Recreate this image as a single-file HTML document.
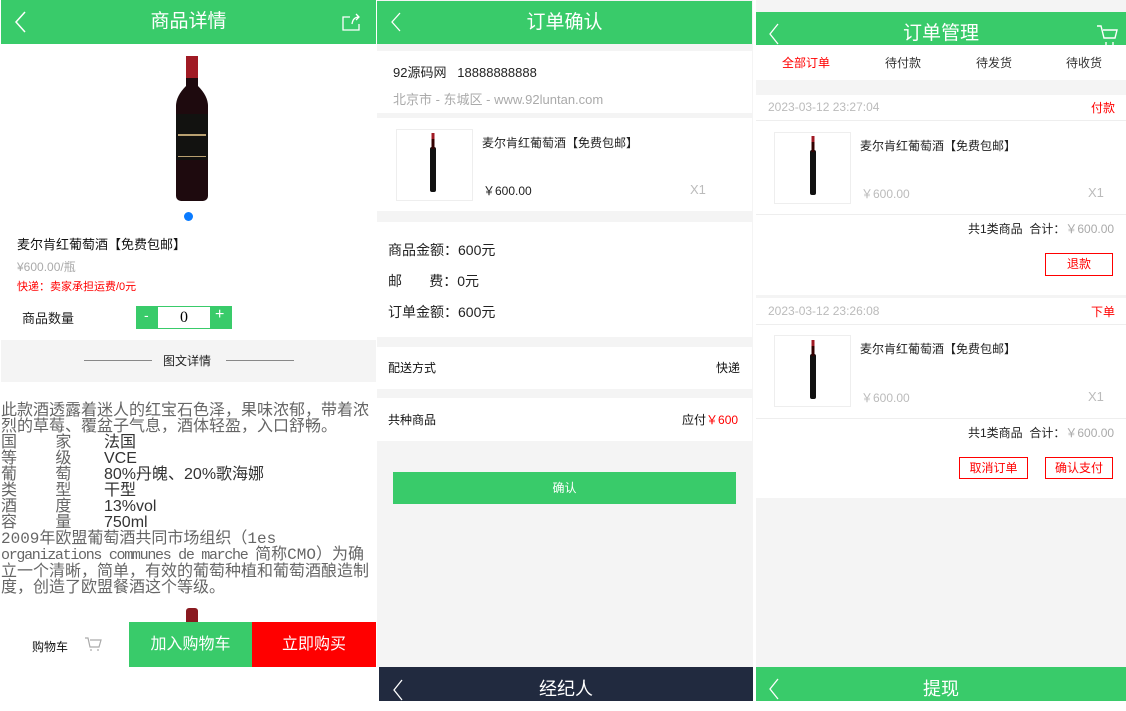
<!DOCTYPE html>
<html><head><meta charset="utf-8"><style>
*{margin:0;padding:0;box-sizing:border-box}
body{width:1126px;height:701px;position:relative;overflow:hidden;background:#fff;font-family:"Liberation Sans","Noto Sans CJK SC",sans-serif;color:#333}
.a{position:absolute;white-space:nowrap}
.g{background:#39cb6a}
.gr{background:#f4f4f4}
.hd{color:#fff;font-size:19px;text-align:center;line-height:44px}
.box{position:absolute;border:1px solid #eee;background:#fff}
.mono{font-family:"Liberation Mono","WenQuanYi Zen Hei",monospace;color:#666;font-size:16px;line-height:16px}
.kv{font-family:"Liberation Sans","Noto Sans CJK SC",sans-serif;color:#333;font-size:16px}
.btn{position:absolute;border:1px solid #f00;color:#f00;font-size:12px;text-align:center;line-height:20px}
</style></head><body>

<svg width="0" height="0" style="position:absolute"><defs>
<g id="bt"><rect x="-16" y="45" width="32" height="100" rx="5" fill="#1e0a0e"/><path d="M-6 0h12v30q10 10 10 20h-32q0-10 10-20z" fill="#1e0a0e"/><rect x="-6" y="0" width="12" height="22" fill="#a01a24"/><rect x="-16" y="58" width="32" height="46" fill="#121210"/><rect x="-14" y="78" width="28" height="2" fill="#b8a070"/><rect x="-14" y="100" width="28" height="1" fill="#b8a070"/></g>
<g id="sb"><rect x="-3" y="14" width="6" height="45" rx="2" fill="#111"/><rect x="-1.5" y="0" width="3" height="16" fill="#300"/><rect x="-1.5" y="0" width="3" height="6" fill="#a01a24"/></g>
</defs></svg>

<!-- Panel 1 -->
<div class="a g hd" style="left:1px;top:0;width:375px;height:44px">商品详情</div>
<svg class="a" style="left:14px;top:10px" width="14" height="24"><path d="M11 2L2 12l9 10" stroke="#fff" stroke-width="1.5" fill="none"/></svg>
<svg class="a" style="left:342px;top:13px" width="20" height="18"><path d="M8 4H1v13h16v-6M10 11q1-7 7-7M14 1l3 3-3 3" stroke="#fff" stroke-width="1.3" fill="none"/></svg>
<svg class="a" style="left:176px;top:56px" width="40" height="150"><use href="#bt" x="16"/></svg>
<div class="a" style="left:184px;top:212px;width:9px;height:9px;border-radius:50%;background:#0a7bff"></div>
<div class="a" style="left:17px;top:234px;font-size:13px;color:#111">麦尔肯红葡萄酒【免费包邮】</div>
<div class="a" style="left:17px;top:258px;font-size:12px;color:#aaa">¥600.00/瓶</div>
<div class="a" style="left:17px;top:278px;font-size:11px;color:#f00">快递：卖家承担运费/0元</div>
<div class="a" style="left:22px;top:308px;font-size:13px;color:#222">商品数量</div>
<div class="a g" style="left:136px;top:306px;width:96px;height:23px"></div>
<div class="a" style="left:158px;top:307px;width:52px;height:21px;background:#fff;text-align:center;font-size:16px;line-height:21px;font-family:'Liberation Serif',serif;color:#000">0</div>
<div class="a" style="left:144px;top:307px;color:#fff;font-size:14px">-</div>
<div class="a" style="left:215px;top:306px;color:#fff;font-size:16px">+</div>
<div class="a gr" style="left:1px;top:340px;width:375px;height:42px"></div>
<div class="a" style="left:84px;top:360px;width:68px;height:1px;background:#888"></div>
<div class="a" style="left:226px;top:360px;width:68px;height:1px;background:#888"></div>
<div class="a" style="left:163px;top:352px;font-size:12px;color:#222">图文详情</div>
<div class="a mono" style="left:1px;top:403px;width:370px;white-space:normal;word-break:break-all">此款酒透露着迷人的红宝石色泽，果味浓郁，带着浓烈的草莓、覆盆子气息，酒体轻盈，入口舒畅。<br>
<span style="display:inline-block;width:103px">国&nbsp;&nbsp;&nbsp;&nbsp;家</span><span class="kv">法国</span><br>
<span style="display:inline-block;width:103px">等&nbsp;&nbsp;&nbsp;&nbsp;级</span><span class="kv">VCE</span><br>
<span style="display:inline-block;width:103px">葡&nbsp;&nbsp;&nbsp;&nbsp;萄</span><span class="kv">80%丹魄、20%歌海娜</span><br>
<span style="display:inline-block;width:103px">类&nbsp;&nbsp;&nbsp;&nbsp;型</span><span class="kv">干型</span><br>
<span style="display:inline-block;width:103px">酒&nbsp;&nbsp;&nbsp;&nbsp;度</span><span class="kv">13%vol</span><br>
<span style="display:inline-block;width:103px">容&nbsp;&nbsp;&nbsp;&nbsp;量</span><span class="kv">750ml</span><br>
2009年欧盟葡萄酒共同市场组织（1es<br><span style="font-size:15px;letter-spacing:-1.3px">organizations communes de marche </span>简称CMO）为确<br>立一个清晰，简单，有效的葡萄种植和葡萄酒酿造制<br>度，创造了欧盟餐酒这个等级。</div>
<div class="a" style="left:186px;top:608px;width:12px;height:14px;background:#8a1a20;border-radius:3px 3px 0 0"></div>
<div class="a" style="left:32px;top:638px;font-size:12px;color:#111">购物车</div>
<svg class="a" style="left:84px;top:636px" width="18" height="16"><path d="M1 2h3l2 9h9l2-7H6M7 13v2M14 13v2" stroke="#aaa" stroke-width="1.2" fill="none"/></svg>
<div class="a g" style="left:129px;top:622px;width:123px;height:45px;color:#fff;font-size:16px;text-align:center;line-height:45px">加入购物车</div>
<div class="a" style="left:252px;top:622px;width:124px;height:45px;background:#f00;color:#fff;font-size:16px;text-align:center;line-height:45px">立即购买</div>

<!-- Panel 2 -->
<div class="a gr" style="left:377px;top:0;width:376px;height:667px"></div>
<div class="a g hd" style="left:377px;top:1px;width:375px;height:43px">订单确认</div>
<svg class="a" style="left:389px;top:11px" width="14" height="22"><path d="M11 2L3 11l8 9" stroke="#fff" stroke-width="1.3" fill="none"/></svg>
<div class="a" style="left:377px;top:51px;width:375px;height:62px;background:#fff"></div>
<div class="a" style="left:393px;top:62px;font-size:13px;color:#222">92源码网&nbsp;&nbsp;&nbsp;18888888888</div>
<div class="a" style="left:393px;top:89px;font-size:13px;color:#aaa">北京市 - 东城区 - www.92luntan.com</div>
<div class="a" style="left:377px;top:118px;width:375px;height:93px;background:#fff"></div>
<div class="box" style="left:396px;top:129px;width:77px;height:72px"></div>
<svg class="a" style="left:428px;top:133px" width="10" height="62"><use href="#sb" x="5"/></svg>
<div class="a" style="left:482px;top:134px;font-size:12px;color:#222">麦尔肯红葡萄酒【免费包邮】</div>
<div class="a" style="left:483px;top:182px;font-size:12px;color:#222">￥600.00</div>
<div class="a" style="left:690px;top:182px;font-size:13px;color:#bbb">X1</div>
<div class="a" style="left:377px;top:222px;width:375px;height:115px;background:#fff"></div>
<div class="a" style="left:388px;top:240px;font-size:14px;color:#222">商品金额：600元</div>
<div class="a" style="left:388px;top:271px;font-size:14px;color:#222">邮&nbsp;&nbsp;&nbsp;&nbsp;&nbsp;&nbsp;&nbsp;费：0元</div>
<div class="a" style="left:388px;top:302px;font-size:14px;color:#222">订单金额：600元</div>
<div class="a" style="left:377px;top:347px;width:375px;height:42px;background:#fff"></div>
<div class="a" style="left:388px;top:359px;font-size:12px;color:#111">配送方式</div>
<div class="a" style="left:716px;top:359px;font-size:12px;color:#111">快递</div>
<div class="a" style="left:377px;top:398px;width:375px;height:43px;background:#fff"></div>
<div class="a" style="left:388px;top:411px;font-size:12px;color:#111">共种商品</div>
<div class="a" style="left:682px;top:411px;font-size:12px;color:#111">应付<span style="color:#f00">￥600</span></div>
<div class="a g" style="left:393px;top:472px;width:343px;height:32px;color:#fff;font-size:12px;text-align:center;line-height:32px">确认</div>
<div class="a" style="left:379px;top:667px;width:374px;height:34px;background:#212a3f;color:#fff;font-size:18px;text-align:center;line-height:44px">经纪人</div>
<svg class="a" style="left:391px;top:678px" width="14" height="24"><path d="M11 2L3 12l8 10" stroke="#fff" stroke-width="1.3" fill="none"/></svg>

<!-- Panel 3 -->
<div class="a gr" style="left:756px;top:0;width:370px;height:667px"></div>
<div class="a g hd" style="left:756px;top:12px;width:370px;height:33px;line-height:44px;overflow:hidden">订单管理</div>
<svg class="a" style="left:767px;top:22px" width="14" height="23"><path d="M11 2L3 12l8 10" stroke="#fff" stroke-width="1.3" fill="none"/></svg>
<svg class="a" style="left:1096px;top:24px" width="22" height="21"><path d="M1 2h4l3 12h11l2-8H7M10 18v3M17 18v3" stroke="#fff" stroke-width="1.4" fill="none"/></svg>
<div class="a" style="left:756px;top:45px;width:370px;height:35px;background:#fff"></div>
<div class="a" style="left:782px;top:54px;font-size:12px;color:#f00">全部订单</div>
<div class="a" style="left:885px;top:54px;font-size:12px;color:#333">待付款</div>
<div class="a" style="left:976px;top:54px;font-size:12px;color:#333">待发货</div>
<div class="a" style="left:1066px;top:54px;font-size:12px;color:#333">待收货</div>

<div class="a" style="left:756px;top:95px;width:370px;height:200px;background:#fff"></div>
<div class="a" style="left:768px;top:100px;font-size:12px;color:#bbb">2023-03-12 23:27:04</div>
<div class="a" style="left:1091px;top:99px;font-size:12px;color:#f00">付款</div>
<div class="a" style="left:756px;top:120px;width:370px;height:1px;background:#eee"></div>
<div class="box" style="left:774px;top:132px;width:77px;height:72px"></div>
<svg class="a" style="left:808px;top:136px" width="10" height="62"><use href="#sb" x="5"/></svg>
<div class="a" style="left:860px;top:137px;font-size:12px;color:#222">麦尔肯红葡萄酒【免费包邮】</div>
<div class="a" style="left:861px;top:185px;font-size:12px;color:#bbb">￥600.00</div>
<div class="a" style="left:1088px;top:185px;font-size:13px;color:#bbb">X1</div>
<div class="a" style="left:756px;top:214px;width:370px;height:1px;background:#eee"></div>
<div class="a" style="left:968px;top:220px;font-size:12px;color:#222">共1类商品&nbsp;&nbsp;合计：<span style="color:#aaa">￥600.00</span></div>
<div class="btn" style="left:1045px;top:253px;width:68px;height:23px">退款</div>

<div class="a" style="left:756px;top:298px;width:370px;height:200px;background:#fff"></div>
<div class="a" style="left:768px;top:304px;font-size:12px;color:#bbb">2023-03-12 23:26:08</div>
<div class="a" style="left:1091px;top:303px;font-size:12px;color:#f00">下单</div>
<div class="a" style="left:756px;top:324px;width:370px;height:1px;background:#eee"></div>
<div class="box" style="left:774px;top:335px;width:77px;height:72px"></div>
<svg class="a" style="left:808px;top:340px" width="10" height="62"><use href="#sb" x="5"/></svg>
<div class="a" style="left:860px;top:340px;font-size:12px;color:#222">麦尔肯红葡萄酒【免费包邮】</div>
<div class="a" style="left:861px;top:389px;font-size:12px;color:#bbb">￥600.00</div>
<div class="a" style="left:1088px;top:389px;font-size:13px;color:#bbb">X1</div>
<div class="a" style="left:756px;top:418px;width:370px;height:1px;background:#eee"></div>
<div class="a" style="left:968px;top:424px;font-size:12px;color:#222">共1类商品&nbsp;&nbsp;合计：<span style="color:#aaa">￥600.00</span></div>
<div class="btn" style="left:959px;top:457px;width:69px;height:22px">取消订单</div>
<div class="btn" style="left:1045px;top:457px;width:68px;height:22px">确认支付</div>
<div class="a g" style="left:756px;top:667px;width:370px;height:34px;color:#fff;font-size:18px;text-align:center;line-height:44px">提现</div>
<svg class="a" style="left:767px;top:677px" width="14" height="24"><path d="M11 2L3 12l8 10" stroke="#fff" stroke-width="1.3" fill="none"/></svg>
</body></html>
